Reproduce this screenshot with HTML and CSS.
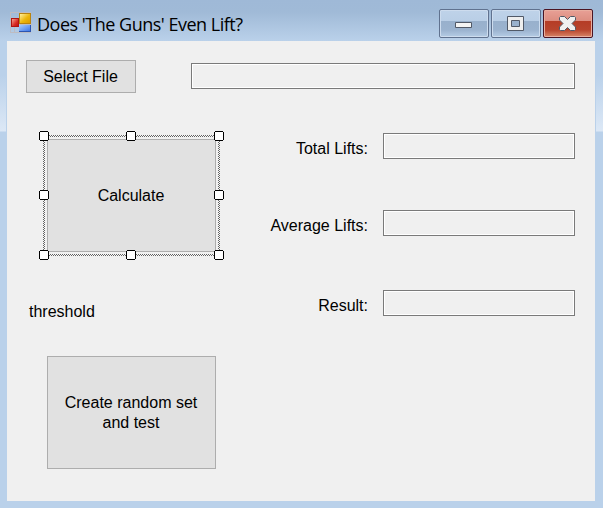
FILE: index.html
```html
<!DOCTYPE html>
<html lang="en">
<head>
<meta charset="utf-8">
<title>Does 'The Guns' Even Lift?</title>
<link rel="stylesheet" href="styles.css">
</head>
<body>
<div class="window">
  <header class="titlebar">
    <svg class="app-icon" width="22" height="22" viewBox="0 0 22 22" shape-rendering="crispEdges">
      <defs>
        <linearGradient id="red" x2="1" y2="1"><stop stop-color="#f4a090"/><stop offset=".6" stop-color="#d92c24"/><stop offset="1" stop-color="#c01010"/></linearGradient>
        <linearGradient id="gold" x2="1" y2="1"><stop stop-color="#fff0a0"/><stop offset=".55" stop-color="#edb60c"/><stop offset="1" stop-color="#dc9c00"/></linearGradient>
        <linearGradient id="blue" x2="1" y2="1"><stop stop-color="#a8ccff"/><stop offset="1" stop-color="#3f78e8"/></linearGradient>
      </defs>
      <path d="M.5.5h20v20H.5zM4.500 15v5M9.500 12.500h12" fill="none" stroke="#bdbcc2"/>
      <path fill="#b01410" d="M1 6h8v9H1z"/><path fill="url(#red)" d="M2 7h6v7H2z"/>
      <path fill="#b98310" d="M9 1h12v11H9z"/><path fill="url(#gold)" d="M10 2h10v9H10z"/>
      <path fill="#2c55b0" d="M9 13h12v7H9z"/><path fill="url(#blue)" d="M9 13h11v6H9z"/>
    </svg>
    <h1 class="title">Does 'The Guns' Even Lift?</h1>
    <div class="controls">
      <button class="control" aria-label="Minimize">
        <svg width="50" height="29" viewBox="0 0 50 29"><path d="M16.500 13.500h16v5h-16z" fill="#f4f4f4" stroke="#515967"/></svg>
      </button>
      <button class="control" aria-label="Maximize">
        <svg width="50" height="29" viewBox="0 0 50 29"><path d="M16.500 7.500h16v14h-16zM20.500 11.500v6h8v-6z" fill="#eee" fill-rule="evenodd" stroke="#515967"/></svg>
      </button>
      <button class="control close" aria-label="Close">
        <svg width="50" height="29" viewBox="0 0 50 29"><path d="M17.500 7.500H21.500l3 3 3-3h4l1 1V11l-3.500 3.500 3.500 3.500v2.500l-1 1h-4l-3-3-3 3h-4l-1-1V18l3.500-3.500-3.500-3.500V8.500z" fill="#f0f0f0" stroke="#515967"/></svg>
      </button>
    </div>
  </header>
  <main class="client">
    <div class="file-row">
      <button class="button select">Select File</button>
      <input class="field path" readonly aria-label="File">
    </div>
    <div class="columns">
      <section class="actions">
        <div class="selected">
          <button class="button large">Calculate</button>
          <svg class="selection" width="185" height="129" viewBox="0 0 185 129" shape-rendering="crispEdges">
            <defs><pattern id="checker" width="2" height="2" patternUnits="userSpaceOnUse"><path fill="#f8f8f8" d="M0 0h2v2H0z"/><path fill="#636363" d="M0 0h1v1H0zM1 1h1v1H1z"/></pattern></defs>
            <path fill="url(#checker)" fill-rule="evenodd" d="M4 4h177v121H4zM6 6v117h173V6z"/>
            <g fill="#000">
              <path d="M1 0h8v1h1v8h-1v1H1V9H0V1h1zM88 0h8v1h1v8h-1v1h-8V9h-1V1h1zM176 0h8v1h1v8h-1v1h-8V9h-1V1h1z"/>
              <path d="M1 59h8v1h1v8h-1v1H1v-1H0v-8h1zM176 59h8v1h1v8h-1v1h-8v-1h-1v-8h1z"/>
              <path d="M1 119h8v1h1v8h-1v1H1v-1H0v-8h1zM88 119h8v1h1v8h-1v1h-8v-1h-1v-8h1zM176 119h8v1h1v8h-1v1h-8v-1h-1v-8h1z"/>
            </g>
            <path fill="#fff" d="M1 1h8v8H1zM88 1h8v8h-8zM176 1h8v8h-8zM1 60h8v8H1zM176 60h8v8h-8zM1 120h8v8H1zM88 120h8v8h-8zM176 120h8v8h-8z"/>
          </svg>
        </div>
        <p class="threshold">threshold</p>
        <button class="button large">Create random set<br>and test</button>
      </section>
      <section class="results">
        <label class="result"><span>Total Lifts:</span><input class="field" readonly></label>
        <label class="result"><span>Average Lifts:</span><input class="field" readonly></label>
        <label class="result"><span>Result:</span><input class="field" readonly></label>
      </section>
    </div>
  </main>
</div>
</body>
</html>
```
FILE: styles.css
```css
* { box-sizing: border-box; }
body { margin: 0; font: 16px/20px "Liberation Sans", Arial, sans-serif; color: #000; }
.window {
  width: 603px;
  height: 508px;
  padding: 0 8px 7px 7px;
  background:
    linear-gradient(#bad1ea, #bad1ea) 6px 41px / 590px 460px no-repeat,
    linear-gradient(#9fb9d7 0, #a0bad7 12px, #bad1ea 41px, #bad1ea 75px, #dce8f6 131px, #bad1ea 132px);
}
.titlebar { display: flex; height: 41px; padding: 0 2px 0 4px; }
.app-icon { display: block; margin: 12px 0 0 -1px; flex: none; }
.title {
  margin: 12px 0 0 5px;
  font: 18px/24px "Open Sans", "Noto Sans", sans-serif;
  letter-spacing: -0.49px;
  white-space: nowrap;
}
.controls { display: flex; gap: 2px; margin: 9px 0 0 auto; }
.control {
  width: 50px;
  height: 29px;
  padding: 0;
  border: 1px solid #60728f;
  border-radius: 2px;
  background: linear-gradient(#bfd3e9 0, #b9cee6 11px, #98b0cc 11px, #9bb3cf 20px, #b5cce5 100%);
  box-shadow: inset 0 0 0 1px #cddcee;
}
.control svg { display: block; margin: -1px; }
.close {
  border-color: #4b1423;
  background: linear-gradient(#e8a096 0, #dc8d80 11px, #b53c26 11px, #b8452e 20px, #d88668 100%);
  box-shadow: inset 0 0 0 1px #e9aea0;
}
.client { height: 460px; padding: 19px 20px 0 19px; background: #f0f0f0; }
.file-row { display: flex; gap: 55px; }
.button {
  display: block;
  padding: 0;
  border: 1px solid #adadad;
  background: #e1e1e1;
  color: #000;
  font: inherit;
}
.select { width: 110px; height: 33px; padding-right: 1px; }
.field {
  display: block;
  width: 192px;
  height: 26px;
  padding: 0;
  border: 1px solid #7a7a7a;
  background: #f0f0f0;
  box-shadow: inset 0 0 0 1px #fff;
  font: inherit;
  outline: none;
}
.path { width: 384px; margin-top: 3px; }
.columns { display: flex; justify-content: space-between; }
.actions { padding: 46px 0 0 21px; }
.large { width: 169px; height: 113px; padding-right: 1px; }
.selected { position: relative; }
.selection { position: absolute; left: -8px; top: -8px; }
.threshold { margin: 50px 0 34px -18px; }
.results { padding-top: 40px; }
.result { display: flex; justify-content: flex-end; gap: 15px; margin-bottom: 51px; }
.result + .result { margin-bottom: 54px; }
.result span { padding-top: 6px; }
```
